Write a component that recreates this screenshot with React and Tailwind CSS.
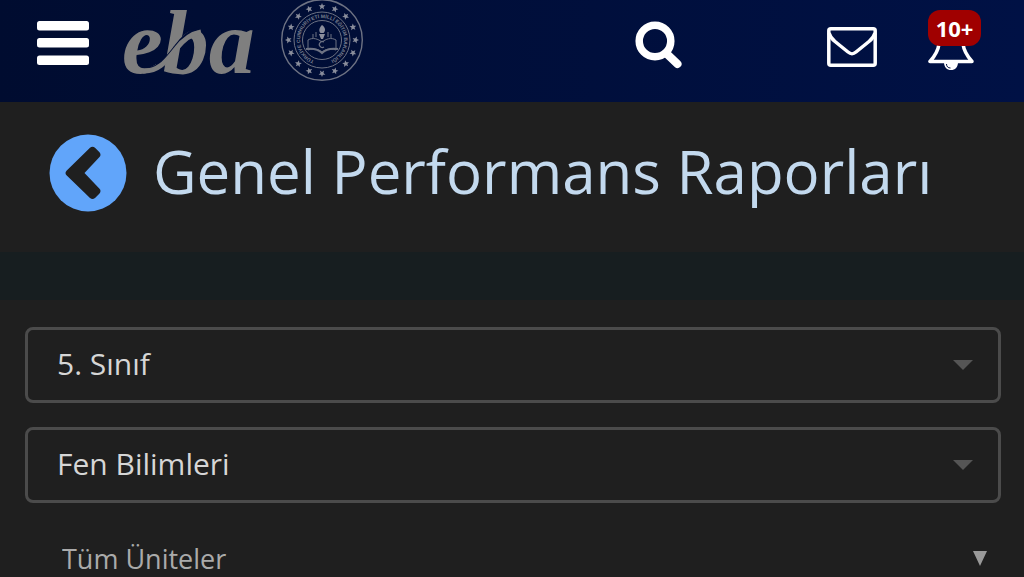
import React, { useState } from 'react';

const MenuIcon = () => (
    <svg viewBox="0 0 52 44" className="w-[52px] h-11" fill="#fff">
        <rect x="0" y="0" width="52" height="9.5" rx="2.5" />
        <rect x="0" y="17" width="52" height="9.5" rx="2.5" />
        <rect x="0" y="34.5" width="52" height="9.5" rx="2.5" />
    </svg>
);

const EbaLogo = () => (
    <svg viewBox="-4 0 136 82" className="w-[136px] h-[82px] overflow-visible" role="img" aria-label="eba">
        <text
            x="-3"
            y="73"
            fill="#7f7f7f"
            fontSize="92"
            fontWeight="700"
            fontStyle="italic"
            fontFamily="'Liberation Serif', serif"
        >
            eba
        </text>
        {/* swash joining the e to the b */}
        <path d="M24 69 C36 66 43 56 51 46 C57 38 63 32 72 29" fill="none" stroke="#000d35" strokeWidth="3" />
        <path d="M18 71 C34 72 42 60 51 49 C58 40 65 34 76 32" fill="none" stroke="#7f7f7f" strokeWidth="5" />
    </svg>
);

const STAR_COUNT = 16;
const stars = Array.from({ length: STAR_COUNT }, (_, i) => (i * 360) / STAR_COUNT);

const MinistrySeal = () => (
    <svg viewBox="0 0 82 82" className="w-[82px] h-[82px]" fill="none" stroke="#6d7283">
        <circle cx="41" cy="40" r="40.3" strokeWidth="1.4" />
        <circle cx="41" cy="40" r="28" strokeWidth="1" />
        <circle cx="41" cy="40" r="19.5" strokeWidth="1" />
        {stars.map((angle) => (
            <path
                key={angle}
                transform={`rotate(${angle} 41 40)`}
                d="M41 3 L41.9 5.2 L44.4 5.3 L42.5 7 L43.1 9.4 L41 8 L38.9 9.4 L39.5 7 L37.6 5.3 L40.1 5.2 Z"
                fill="#8a8e9c"
                stroke="none"
            />
        ))}
        <defs>
            <path id="seal-ring" d="M41 62 A22 22 0 1 1 41.1 62" />
        </defs>
        <text fill="#7b8090" stroke="none" fontSize="5" fontWeight="700" fontFamily="'Liberation Sans', sans-serif">
            <textPath href="#seal-ring" startOffset="8">TÜRKİYE CUMHURİYETİ MİLLÎ EĞİTİM BAKANLIĞI</textPath>
        </text>
        {/* torch and open book */}
        <path d="M41 25 C45 28 44.5 31 42.5 33 H39.5 C37.5 31 38 28 41 25 Z" fill="#8a8e9c" stroke="none" />
        <path d="M38 34 H44 L42 39 H40 Z" fill="#8a8e9c" stroke="none" />
        <path d="M27 40 C32 37 37 39 41 42 C45 39 50 37 55 40 V50 C49 48 45 49 41 52 C37 49 33 48 27 50 Z" strokeWidth="1" />
        <path d="M25 49 C32 48 37 49 41 53 C45 49 50 48 57 49" strokeWidth="2" />
        <path d="M43 42 A3 3 0 1 0 43 47" strokeWidth="1.2" />
        <path d="M32 38 V34 M35 37 V32 M50 38 V34 M47 37 V32" strokeWidth="1" />
    </svg>
);

const SearchIcon = () => (
    <svg viewBox="0 0 48 48" className="w-12 h-12" fill="none" stroke="#fff">
        <circle cx="20" cy="20" r="15.8" strokeWidth="7.5" />
        <path d="M32 33 L42.5 43" strokeWidth="8" strokeLinecap="round" />
    </svg>
);

const MailIcon = () => (
    <svg viewBox="0 0 50 40" className="w-[50px] h-10" fill="none" stroke="#fff" strokeWidth="3.5" strokeLinejoin="round">
        <rect x="1.8" y="1.8" width="46.4" height="36.4" rx="2" />
        <path d="M2 6 C3 10 5 12 8 14.5 L21 25 C24 27.5 26 27.5 29 25 L42 14.5 C45 12 47 10 48 6" />
    </svg>
);

const BellIcon = () => (
    <svg viewBox="0 0 46 46" className="w-[46px] h-[46px]">
        <path
            d="M11 20 C10 28 6 33 2 37.5 H44 C40 33 36 28 35 20 C34 10 30 6 23 6 C16 6 12 10 11 20 Z"
            fill="none"
            stroke="#fff"
            strokeWidth="3.5"
            strokeLinejoin="round"
        />
        <path d="M16 38 H30 C30 43.5 27 46 23 46 C19 46 16 43.5 16 38 Z" fill="#fff" />
        <path d="M18.5 40 C18.5 42.5 20 44 22.5 44" fill="none" stroke="#000f40" strokeWidth="1" />
    </svg>
);

const BackIcon = () => (
    <svg viewBox="0 0 78 78" className="w-[78px] h-[78px]">
        <circle cx="39" cy="39" r="38.5" fill="#61a5fa" />
        <path
            d="M17.5 36.7 L41 13.8 Q43.5 11.8 46 13.8 L50.5 18.2 Q52.5 20.7 50.5 23 L35.5 39 L50.5 54.8 Q52.5 57 50.5 59.5 L46 64 Q43.5 66 41 64 L17.5 41.3 Q15.5 39 17.5 36.7 Z"
            fill="#1f1f1f"
        />
    </svg>
);

const FilterSelect = ({ label, value, onChange, options }) => (
    <div className="relative">
        <select
            aria-label={label}
            value={value}
            onChange={onChange}
            className="block w-full h-[76px] appearance-none rounded-lg border-[3px] border-[#4b4b4b] bg-[#1f1f1f] pb-1 pl-[29px] pr-16 text-[30px] text-[#d6d6d6] focus:outline-none"
        >
            {options.map((opt) => (
                <option key={opt}>{opt}</option>
            ))}
        </select>
        <svg viewBox="0 0 20 10" className="pointer-events-none absolute right-7 top-[33px] w-5 h-[10px]" fill="#555">
            <path d="M0 0 H20 L10 10 Z" />
        </svg>
    </div>
);

const App = () => {
    const [grade, setGrade] = useState('5. Sınıf');
    const [course, setCourse] = useState('Fen Bilimleri');
    const [unit, setUnit] = useState('Tüm Üniteler');

    return (
        <div className="min-h-screen bg-[#1f1f1f] font-['Open_Sans',sans-serif]">
            <header className="flex h-[102px] items-center justify-between bg-linear-to-r from-[#000c30] to-[#001145] pb-3 pl-[37px] pr-[50px]">
                <div className="flex items-center self-start">
                    <button type="button" aria-label="Menü" className="mr-8 mt-1">
                        <MenuIcon />
                    </button>
                    <a href="#" className="mr-6">
                        <EbaLogo />
                    </a>
                    <MinistrySeal />
                </div>

                <div className="flex items-center">
                    <button type="button" aria-label="Ara" className="mr-[144px]">
                        <SearchIcon />
                    </button>
                    <button type="button" aria-label="Mesajlar" className="mr-[51px] mt-1">
                        <MailIcon />
                    </button>
                    <button type="button" aria-label="Bildirimler" className="relative mt-1">
                        <BellIcon />
                        <span className="absolute -top-[14px] left-0 flex h-9 w-[53px] items-center justify-center rounded-xl bg-[#a00000] text-[22px] font-bold text-white">
                            10+
                        </span>
                    </button>
                </div>
            </header>

            <section className="flex items-center gap-[26px] pb-10 pl-[49px] pt-8">
                <button type="button" aria-label="Geri" className="shrink-0">
                    <BackIcon />
                </button>
                <h1 className="whitespace-nowrap pb-1 text-[60px] leading-[72px] text-[#c3d9ee]">Genel Performans Raporları</h1>
            </section>

            <div className="h-12 bg-[#171e20]"></div>

            <main className="flex flex-col gap-6 pl-[25px] pr-[23px] pt-[27px]">
                <FilterSelect
                    label="Sınıf"
                    value={grade}
                    onChange={(e) => setGrade(e.target.value)}
                    options={['5. Sınıf', '6. Sınıf', '7. Sınıf', '8. Sınıf']}
                />
                <FilterSelect
                    label="Ders"
                    value={course}
                    onChange={(e) => setCourse(e.target.value)}
                    options={['Fen Bilimleri', 'Matematik', 'Türkçe']}
                />
                <div className="relative mt-4">
                    <select
                        aria-label="Ünite"
                        value={unit}
                        onChange={(e) => setUnit(e.target.value)}
                        className="block w-full h-8 appearance-none bg-[#1f1f1f] pl-[37px] pr-16 text-[27px] leading-8 text-[#aaa] focus:outline-none"
                    >
                        <option>Tüm Üniteler</option>
                    </select>
                    <svg viewBox="0 0 14 15" className="pointer-events-none absolute right-[14px] top-2 w-[14px] h-[15px]" fill="#999">
                        <path d="M0 0 H14 L7 15 Z" />
                    </svg>
                </div>
            </main>
        </div>
    );
};

export default App;
